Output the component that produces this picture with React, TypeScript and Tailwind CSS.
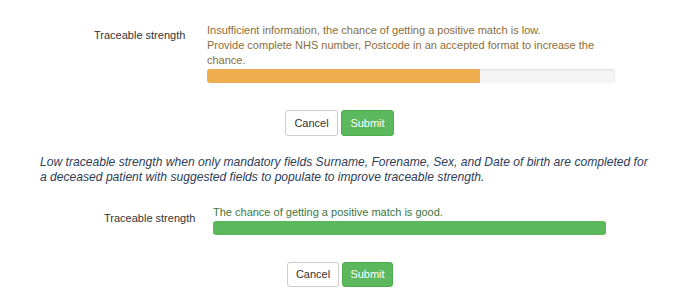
export default function App() {
  return (
    <div className="h-[302px] w-[696px] overflow-hidden bg-white font-['Liberation_Sans',Arial,sans-serif] text-[11px] text-[#333]">
      {/* low strength */}
      <div className="flex pt-[23px]">
        <div className="w-[207px] pl-[94px] pt-[5px] leading-[15px]">Traceable strength</div>
        <div className="w-[408px]">
          <p className="leading-[15px] text-[#8a6d3b]">
            Insufficient information, the chance of getting a positive match is low.
            <br />
            Provide complete NHS number, Postcode in an accepted format to increase the
            <br />
            chance.
          </p>
          <div className="mt-[1px] h-[14px] overflow-hidden rounded-[3px] bg-[#f5f5f5] shadow-[inset_0_1px_2px_rgba(0,0,0,0.1)]">
            <div className="h-full w-[67%] bg-[#f0ad4e]" />
          </div>
        </div>
      </div>
      <div className="mt-[27px] flex gap-[3px] pl-[285px]">
        <button className="h-[26px] w-[53px] rounded-[3px] border border-[#ccc] bg-white text-[11px] text-[#333]">Cancel</button>
        <button className="h-[26px] w-[53px] rounded-[3px] border border-[#4cae4c] bg-[#5cb85c] text-[11px] text-white">Submit</button>
      </div>

      <p className="mt-[19px] pl-[40px] text-[12.1px] italic leading-[15px] text-[#2e3d5a]">
        Low traceable strength when only mandatory fields Surname, Forename, Sex, and Date of birth are completed for
        <br />
        a deceased patient with suggested fields to populate to improve traceable strength.
      </p>

      {/* good strength */}
      <div className="mt-[20px] flex">
        <div className="w-[213px] pl-[104px] pt-[6px] leading-[15px]">Traceable strength</div>
        <div className="w-[393px]">
          <p className="leading-[15px] text-[#3c763d]">The chance of getting a positive match is good.</p>
          <div className="mt-[1px] h-[14px] overflow-hidden rounded-[3px] bg-[#f5f5f5]">
            <div className="h-full w-full bg-[#5cb85c]" />
          </div>
        </div>
      </div>
      <div className="mt-[27px] flex gap-[3px] pl-[287px]">
        <button className="h-[25px] w-[52px] rounded-[3px] border border-[#ccc] bg-white text-[11px] text-[#333]">Cancel</button>
        <button className="h-[25px] w-[51px] rounded-[3px] border border-[#4cae4c] bg-[#5cb85c] text-[11px] text-white">Submit</button>
      </div>
    </div>
  );
}
